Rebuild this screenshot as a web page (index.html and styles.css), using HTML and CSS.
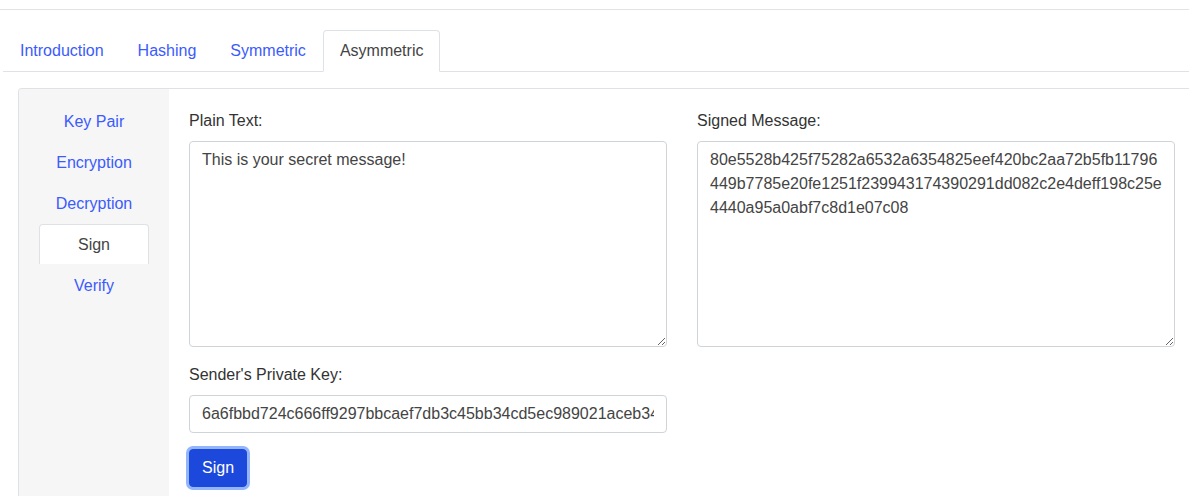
FILE: index.html
```html
<!DOCTYPE html>
<html>
<head>
<meta charset="utf-8">
<link rel="stylesheet" href="styles.css">
</head>
<body>
<div class="topbar"></div>
<div class="page">
  <ul class="tabs">
    <li><a class="tab">Introduction</a></li>
    <li><a class="tab">Hashing</a></li>
    <li><a class="tab">Symmetric</a></li>
    <li><a class="tab active">Asymmetric</a></li>
  </ul>
  <div class="panel">
    <ul class="side">
      <li><a class="pill">Key Pair</a></li>
      <li><a class="pill">Encryption</a></li>
      <li><a class="pill">Decryption</a></li>
      <li><a class="pill active">Sign</a></li>
      <li><a class="pill">Verify</a></li>
    </ul>
    <div class="content">
      <div class="cols">
        <div class="group">
          <label class="label">Plain Text:</label>
          <textarea class="field area">This is your secret message!</textarea>
        </div>
        <div class="group">
          <label class="label">Signed Message:</label>
          <textarea class="field area">80e5528b425f75282a6532a6354825eef420bc2aa72b5fb11796449b7785e20fe1251f239943174390291dd082c2e4deff198c25e4440a95a0abf7c8d1e07c08</textarea>
        </div>
      </div>
      <div class="group half">
        <label class="label">Sender's Private Key:</label>
        <input class="field input" type="text" value="6a6fbbd724c666ff9297bbcaef7db3c45bb34cd5ec989021aceb34e7a1b2c3d4e5f60718293a4b5c6d7e8f90">
      </div>
      <button class="btn">Sign</button>
    </div>
  </div>
</div>
</body>
</html>
```
FILE: styles.css
```css
html, body {
  margin: 0;
  padding: 0;
  overflow: hidden;
  background: #fff;
  font-family: "Liberation Sans", Arial, sans-serif;
  font-size: 16px;
  line-height: 24px;
  color: #333;
}
.topbar {
  height: 9px;
  border-bottom: 1px solid #e3e3e3;
}
.page {
  padding: 20px 0 0 3px;
}
.tabs {
  list-style: none;
  margin: 0;
  padding: 0;
  display: flex;
  border-bottom: 1px solid #dee2e6;
}
.tabs li {
  margin-bottom: -1px;
}
.tab {
  display: block;
  padding: 8px 16px;
  border: 1px solid transparent;
  border-radius: 4px 4px 0 0;
  color: #3b5bfd;
  cursor: pointer;
}
.tab.active {
  color: #444;
  background: #fff;
  border-color: #dee2e6 #dee2e6 #fff;
}
.panel {
  margin: 16px 0 0 15px;
  display: flex;
  border: 1px solid #dee2e6;
  border-right: none;
  border-radius: 4px 0 0 0;
  overflow: hidden;
}
.side {
  list-style: none;
  margin: 0;
  padding: 12px 20px 0;
  width: 110px;
  flex: none;
  background: #f6f6f6;
}
.pill {
  display: block;
  text-align: center;
  padding: 8px 0;
  border: 1px solid transparent;
  border-bottom: none;
  border-radius: 4px 4px 0 0;
  color: #3b5bfd;
  cursor: pointer;
  line-height: 24px;
  height: 40px;
  box-sizing: border-box;
  margin-bottom: 1px;
}
.pill.active {
  background: #fff;
  color: #444;
  border-color: #dee2e6;
}
.content {
  padding: 20px 20px 20px 20px;
  flex: 1;
}
.cols {
  display: grid;
  grid-template-columns: 478px 478px;
  column-gap: 30px;
}
.group {
  margin-bottom: 16px;
}
.half {
  width: 478px;
}
.label {
  display: block;
  margin-bottom: 8px;
  color: #333;
}
.field {
  display: block;
  width: 100%;
  box-sizing: border-box;
  border: 1px solid #ced4da;
  border-radius: 4px;
  padding: 6px 12px;
  font-family: "Liberation Sans", Arial, sans-serif;
  font-size: 16px;
  line-height: 24px;
  color: #444;
  background: #fff;
  margin: 0;
}
.area {
  height: 206px;
  resize: vertical;
}
.input {
  height: 38px;
}
.btn {
  display: block;
  font-family: "Liberation Sans", Arial, sans-serif;
  font-size: 16px;
  line-height: 24px;
  padding: 6px 12px;
  border: 1px solid #1d48dc;
  border-radius: 4px;
  background: #1d48dc;
  color: #fff;
  box-shadow: 0 0 0 3px #93b5fd;
  margin: 0;
}
```
